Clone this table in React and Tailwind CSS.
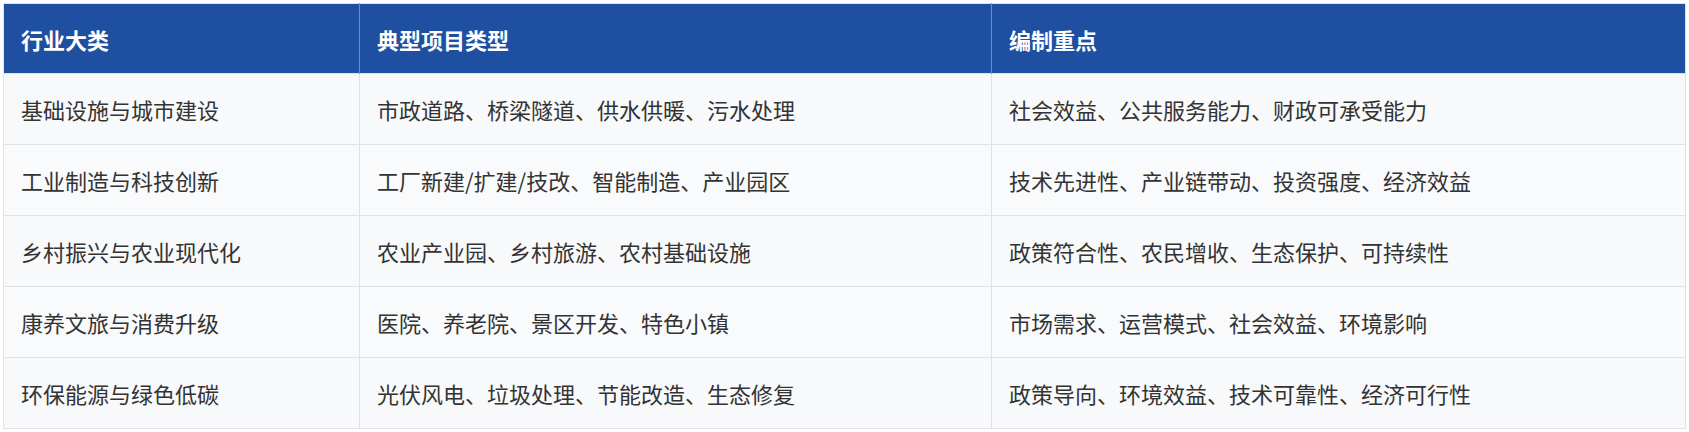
import React from "react";

const rows = [
  ["基础设施与城市建设", "市政道路、桥梁隧道、供水供暖、污水处理", "社会效益、公共服务能力、财政可承受能力"],
  ["工业制造与科技创新", "工厂新建/扩建/技改、智能制造、产业园区", "技术先进性、产业链带动、投资强度、经济效益"],
  ["乡村振兴与农业现代化", "农业产业园、乡村旅游、农村基础设施", "政策符合性、农民增收、生态保护、可持续性"],
  ["康养文旅与消费升级", "医院、养老院、景区开发、特色小镇", "市场需求、运营模式、社会效益、环境影响"],
  ["环保能源与绿色低碳", "光伏风电、垃圾处理、节能改造、生态修复", "政策导向、环境效益、技术可靠性、经济可行性"],
];

export default function App() {
  return (
    <div
      className="w-[1689px] h-[432px] bg-white p-[3px]"
      style={{ fontFamily: '"Microsoft YaHei", "Noto Sans CJK SC", "Noto Sans", sans-serif' }}
    >
      <table className="w-[1682px] table-fixed border-collapse border border-[#dfe1e5] text-[22px] leading-[30px]">
        <colgroup>
          <col className="w-[356px]" />
          <col className="w-[632px]" />
          <col className="w-[694px]" />
        </colgroup>
        <thead>
          <tr className="h-[70px] bg-[#1f4fa1] text-white">
            <th className="border-r border-[#6f8fc4] pl-[17px] text-left font-bold">行业大类</th>
            <th className="border-r border-[#6f8fc4] pl-[17px] text-left font-bold">典型项目类型</th>
            <th className="pl-[17px] text-left font-bold">编制重点</th>
          </tr>
        </thead>
        <tbody>
          {rows.map((r, i) => (
            <tr key={i} className={i % 2 === 0 ? "h-[71px] bg-[#f8f9fb]" : "h-[71px] bg-[#f9fafb]"}>
              {r.map((c, j) => (
                <td key={j} className="border border-[#dfe1e5] pl-[17px] text-[#333333] align-middle">
                  {c}
                </td>
              ))}
            </tr>
          ))}
        </tbody>
      </table>
    </div>
  );
}
